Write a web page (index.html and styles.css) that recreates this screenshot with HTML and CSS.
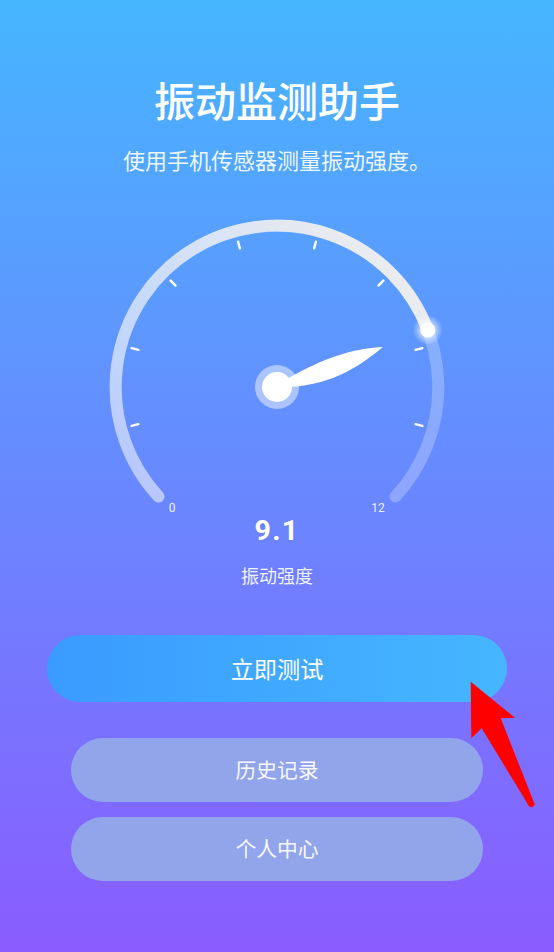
FILE: index.html
```html
<!DOCTYPE html>
<html lang="zh-CN">
<head>
<meta charset="utf-8">
<title>振动监测助手</title>
<link rel="stylesheet" href="styles.css">
</head>
<body>
<main class="screen">
  <header class="header">
    <h1 class="title">振动监测助手</h1>
    <p class="subtitle">使用手机传感器测量振动强度。</p>
  </header>
  <section class="gauge">
    <svg class="gauge-svg" width="340" height="300" viewBox="0 0 340 300" aria-hidden="true">
      <defs>
        <linearGradient id="prog" gradientUnits="userSpaceOnUse" x1="50" y1="290" x2="300" y2="60">
          <stop offset="0" stop-color="#fff" stop-opacity="0.38"/>
          <stop offset="0.35" stop-color="#e4eaf8" stop-opacity="0.7"/>
          <stop offset="0.7" stop-color="#e2e8f3" stop-opacity="0.96"/>
          <stop offset="1" stop-color="#ecedee" stop-opacity="1"/>
        </linearGradient>
        <radialGradient id="glow">
          <stop offset="0.45" stop-color="#fff" stop-opacity="0.6"/>
          <stop offset="1" stop-color="#fff" stop-opacity="0"/>
        </radialGradient>
      </defs>
      <g transform="translate(170 172)">
        <path class="arc-track" d="M-118.5 109.5A161.3 161.3 0 1 1 118.5 109.5"/>
        <path class="arc-progress" d="M-118.5 109.5A161.3 161.3 0 1 1 150.8 -57"/>
        <g class="ticks">
          <line x1="143.5" x2="150.5" transform="rotate(15)"/>
          <line x1="143.5" x2="150.5" transform="rotate(-15)"/>
          <line x1="143.5" x2="150.5" transform="rotate(-45)"/>
          <line x1="143.5" x2="150.5" transform="rotate(-75)"/>
          <line x1="143.5" x2="150.5" transform="rotate(-105)"/>
          <line x1="143.5" x2="150.5" transform="rotate(-135)"/>
          <line x1="143.5" x2="150.5" transform="rotate(-165)"/>
          <line x1="143.5" x2="150.5" transform="rotate(165)"/>
        </g>
        <circle cx="150.8" cy="-57" r="15" fill="url(#glow)"/>
        <circle cx="150.8" cy="-57" r="7.5" fill="#fff"/>
        <path fill="#fff" d="M10 -8C38 -24 68 -38 105.7 -40C88 -25 58 -2 12 0Z"/>
        <circle r="22" fill="#fff" fill-opacity="0.47"/>
        <circle r="15" fill="#fff"/>
      </g>
      <text class="scale" x="65" y="297" text-anchor="middle">0</text>
      <text class="scale" x="271" y="297" text-anchor="middle">12</text>
    </svg>
    <div class="value">9.1</div>
    <div class="label">振动强度</div>
  </section>
  <nav class="actions">
    <button class="btn btn-primary" type="button">立即测试</button>
    <button class="btn btn-secondary" type="button">历史记录</button>
    <button class="btn btn-secondary" type="button">个人中心</button>
  </nav>
  <svg class="arrow" width="554" height="952" viewBox="0 0 554 952" aria-hidden="true">
    <path d="M470.7 681.7L515 717.7L500.7 718.3L534 802.5A3 3 0 0 1 528.6 805.5L481.7 728.3L471.3 738.3Z" fill="#fe0000"/>
  </svg>
</main>
</body>
</html>
```
FILE: styles.css
```css
* { box-sizing: border-box; }
html, body { margin: 0; padding: 0; }
body {
  font-family: "Noto Sans CJK SC", Roboto, sans-serif;
  color: #fff;
}
.screen {
  position: relative;
  width: 554px;
  height: 952px;
  overflow: hidden;
  display: flex;
  flex-direction: column;
  align-items: center;
  padding-top: 69px;
  background: linear-gradient(180deg, #46b6ff 0%, #8a5cff 100%);
}
.header { text-align: center; }
.title {
  margin: 0;
  font-size: 41px;
  line-height: 60px;
  font-weight: 500;
}
.subtitle {
  margin: 15px 0 0;
  font-size: 22px;
  line-height: 30px;
  color: rgba(255, 255, 255, 0.92);
}
.gauge {
  display: flex;
  flex-direction: column;
  align-items: center;
  margin-top: 41px;
}
.gauge-svg { display: block; }
.arc-track, .arc-progress {
  fill: none;
  stroke-width: 12;
  stroke-linecap: round;
}
.arc-track { stroke: rgba(255, 255, 255, 0.25); }
.arc-progress { stroke: url(#prog); }
.ticks line {
  stroke: #fff;
  stroke-width: 2.4;
  stroke-linecap: round;
}
.scale {
  font-family: Roboto, sans-serif;
  font-size: 12px;
  fill: rgba(255, 255, 255, 0.9);
}
.value {
  font-family: Roboto, sans-serif;
  font-size: 28.5px;
  font-weight: 700;
  line-height: 32px;
  letter-spacing: 1.4px;
}
.label {
  margin-top: 15px;
  font-size: 18px;
  line-height: 26px;
  color: rgba(255, 255, 255, 0.92);
}
.actions {
  display: flex;
  flex-direction: column;
  align-items: center;
  margin-top: 47px;
}
.btn {
  display: block;
  border: 0;
  padding: 0 0 2px;
  color: #fff;
  font-family: inherit;
  border-radius: 34px;
}
.btn-primary {
  width: 460px;
  height: 67px;
  font-size: 23.2px;
  background: linear-gradient(90deg, #3a9bff 0%, #46b6ff 100%);
  margin-bottom: 36px;
}
.btn-secondary {
  width: 412px;
  height: 64px;
  font-size: 20.8px;
  background: #93a5ea;
  color: rgba(255, 255, 255, 0.95);
  margin-bottom: 15px;
}
.arrow {
  position: absolute;
  left: 0;
  top: 0;
  pointer-events: none;
}
```
